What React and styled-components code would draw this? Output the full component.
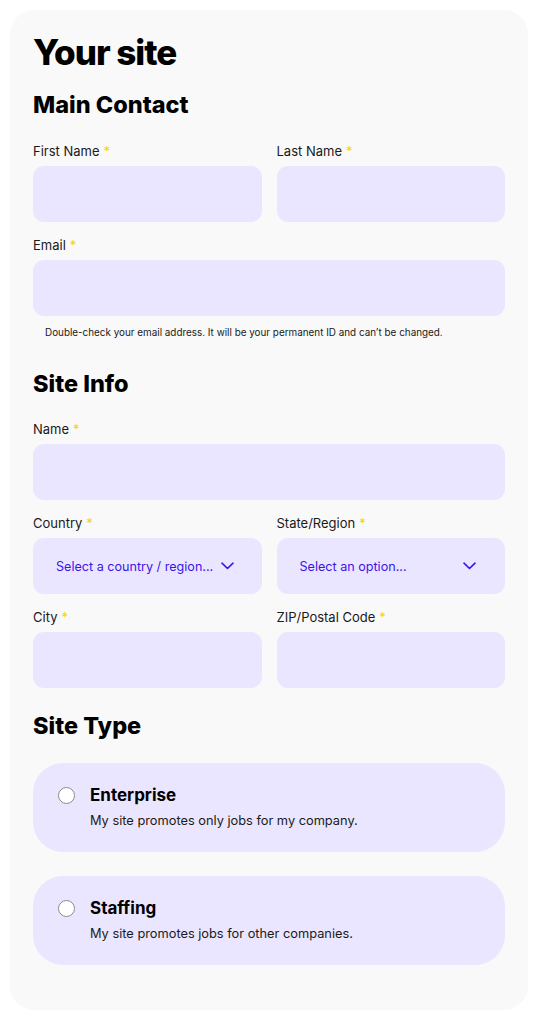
import styled, { createGlobalStyle } from 'styled-components'

const GlobalStyle = createGlobalStyle`
  body {
    margin: 0;
    background: #ffffff;
    font-family: Inter, "Liberation Sans", sans-serif;
    color: #111;
  }
`

// styled components
const Card = styled.div`
  box-sizing: border-box;
  width: 518px;
  height: 1000px;
  margin: 10px;
  padding: 20px 23px 0;
  background: #f9f9f9;
  border-radius: 24px;
  display: flex;
  flex-direction: column;
`
const Title = styled.h1`
  margin: 0;
  font-family: Inter, sans-serif;
  font-weight: 800;
  font-size: 35px;
  line-height: 44px;
  letter-spacing: -1px;
  color: #000;
`
const Heading = styled.h2`
  margin: ${(p) => p.$top || 0}px 0 0;
  font-family: Inter, sans-serif;
  font-weight: 800;
  font-size: 23.5px;
  line-height: 30px;
  color: #000;
`
const Row = styled.div`
  display: grid;
  grid-template-columns: ${(p) => (p.$cols === 2 ? 'minmax(0, 1fr) minmax(0, 1fr)' : 'minmax(0, 1fr)')};
  column-gap: 15px;
  margin-top: ${(p) => p.$top || 14}px;
`
const Field = styled.div`
  display: flex;
  flex-direction: column;
  gap: 6px;
`
const Label = styled.label`
  font-size: 13px;
  line-height: 18px;
  color: #1a1a1a;
`
const Star = styled.span`
  color: #f2d40c;
  margin-left: 4px;
`
const Input = styled.div`
  height: 56px;
  border-radius: 11px;
  background: #ebe6ff;
`
const Select = styled(Input)`
  display: flex;
  align-items: center;
  justify-content: space-between;
  gap: 8px;
  padding: 0 29px 0 23px;
  font-size: 12.6px;
  white-space: nowrap;
  color: #3a16e8;
`
const Help = styled.p`
  margin: 9px 0 0 12px;
  font-size: 9.9px;
  line-height: 14px;
  color: #1a1a1a;
`
const Options = styled.div`
  display: flex;
  flex-direction: column;
  gap: 24px;
  margin-top: 22px;
`
const Option = styled.div`
  display: flex;
  gap: 15px;
  height: 89px;
  box-sizing: border-box;
  padding: 21px 25px 0;
  border-radius: 30px;
  background: #ebe6ff;
`
const Radio = styled.span`
  flex: none;
  width: 17px;
  height: 17px;
  margin-top: 3px;
  border-radius: 50%;
  border: 1.5px solid #8a8a8a;
  background: #fff;
  box-sizing: border-box;
`
const OptionTitle = styled.div`
  font-size: 17px;
  line-height: 22px;
  font-weight: 700;
  color: #000;
`
const OptionText = styled.div`
  margin-top: 6px;
  font-size: 12.8px;
  line-height: 18px;
  color: #1a1a1a;
`

const Chevron = () => (
  <svg width='13' height='8' viewBox='0 0 13 8' fill='none' style={{ flex: 'none' }}>
    <path d='M1 1.2 L6.5 6.5 L12 1.2' stroke='#3a16e8' strokeWidth='1.6' strokeLinecap='round' strokeLinejoin='round' />
  </svg>
)

const TextField = ({ label }) => (
  <Field>
    <Label>
      {label}
      <Star>*</Star>
    </Label>
    <Input />
  </Field>
)

const SelectField = ({ label, placeholder }) => (
  <Field>
    <Label>
      {label}
      <Star>*</Star>
    </Label>
    <Select>
      <span>{placeholder}</span>
      <Chevron />
    </Select>
  </Field>
)

const siteTypes = [
  { title: 'Enterprise', text: 'My site promotes only jobs for my company.' },
  { title: 'Staffing', text: 'My site promotes jobs for other companies.' }
]

export default function App() {
  return (
    <>
      <GlobalStyle />
      <Card>
        <Title>Your site</Title>
        <Heading $top={16}>Main Contact</Heading>
        <Row $cols={2} $top={22}>
          <TextField label='First Name' />
          <TextField label='Last Name' />
        </Row>
        <Row>
          <TextField label='Email' />
        </Row>
        <Help>
          Double-check your email address. It will be your permanent ID and can’t be changed.
        </Help>
        <Heading $top={30}>Site Info</Heading>
        <Row $top={21}>
          <TextField label='Name' />
        </Row>
        <Row $cols={2}>
          <SelectField label='Country' placeholder='Select a country / region...' />
          <SelectField label='State/Region' placeholder='Select an option...' />
        </Row>
        <Row $cols={2}>
          <TextField label='City' />
          <TextField label='ZIP/Postal Code' />
        </Row>
        <Heading $top={23}>Site Type</Heading>
        <Options>
          {siteTypes.map((t) => (
            <Option key={t.title}>
              <Radio />
              <div>
                <OptionTitle>{t.title}</OptionTitle>
                <OptionText>{t.text}</OptionText>
              </div>
            </Option>
          ))}
        </Options>
      </Card>
    </>
  )
}
